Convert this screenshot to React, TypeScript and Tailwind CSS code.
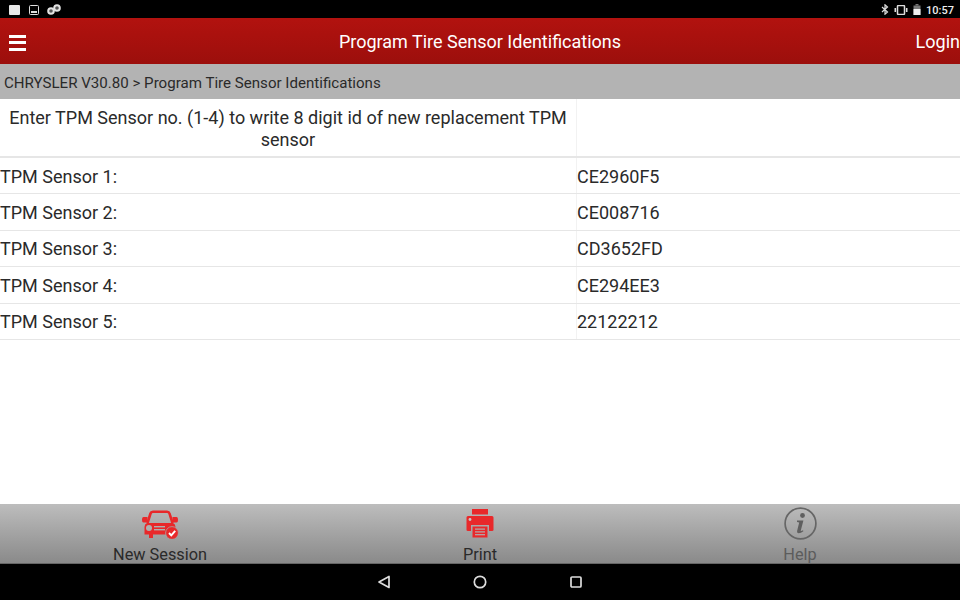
import React from 'react';

const rows = [
  { label: 'TPM Sensor 1:', value: 'CE2960F5' },
  { label: 'TPM Sensor 2:', value: 'CE008716' },
  { label: 'TPM Sensor 3:', value: 'CD3652FD' },
  { label: 'TPM Sensor 4:', value: 'CE294EE3' },
  { label: 'TPM Sensor 5:', value: '22122212' },
];

const CarIcon = () => (
  <svg width="38" height="30" viewBox="0 0 38 30" className="block">
    <path d="M6.5 14 L9.5 4.5 Q10 2.8 12 2.8 H26 Q28 2.8 28.5 4.5 L31.5 14" fill="none" stroke="#e8282a" strokeWidth="2.6" />
    <path d="M2.5 8 H6.5 V13.5 H2.5 Q1 13.5 1 11 Q1 8 2.5 8 Z M31.5 8 H35.5 Q37 8 37 11 Q37 13.5 35.5 13.5 H31.5 Z" fill="#e8282a" />
    <path d="M6 14 H32 Q34.5 15 34.5 18 V25.5 H30 V29 H26 V25.5 H12 V29 H8 V25.5 H3.5 V18 Q3.5 15 6 14 Z" fill="#e8282a" />
    <circle cx="8" cy="19" r="3" fill="#b0b0b0" />
    <rect x="13" y="17" width="11" height="1.4" fill="#b0b0b0" />
    <rect x="13" y="20" width="11" height="1.4" fill="#b0b0b0" />
    <circle cx="31" cy="24" r="6.4" fill="#e8282a" stroke="#a8a8a8" strokeWidth="0.8" />
    <path d="M28 24 L30.3 26.4 L34.2 21.8" fill="none" stroke="#fff" strokeWidth="1.9" />
  </svg>
);

const PrintIcon = () => (
  <svg width="28" height="30" viewBox="0 0 28 30" className="block">
    <rect x="6" y="0" width="16" height="5.5" fill="#e8282a" />
    <path d="M2 7 H26 Q27.5 7 27.5 8.5 V21 Q27.5 22 26 22 H23 V16 H5 V22 H2 Q0.5 22 0.5 21 V8.5 Q0.5 7 2 7 Z" fill="#e8282a" />
    <circle cx="4" cy="10.5" r="1.4" fill="#c8c8c8" />
    <path d="M6.5 17.5 H21.5 V28.5 H6.5 Z" fill="#e8282a" />
    <rect x="9" y="19.5" width="10" height="1.2" fill="#b0b0b0" />
    <rect x="9" y="22.3" width="10" height="1.2" fill="#b0b0b0" />
    <rect x="9" y="25.1" width="10" height="1.2" fill="#b0b0b0" />
  </svg>
);

const HelpIcon = () => (
  <svg width="33" height="33" viewBox="0 0 33 33" className="block">
    <circle cx="16.5" cy="16.5" r="15.4" fill="none" stroke="#666" strokeWidth="1.7" />
    <circle cx="18.5" cy="8.5" r="2.4" fill="#5f5f5f" />
    <path d="M13 13.5 H19.4 L16.8 23.5 Q16.6 24.8 19 23.3 L19.4 24.3 Q16.5 26.4 14.4 26.2 Q12.6 26 13.1 24 L15.2 15.6 L13 15 Z" fill="#5f5f5f" />
  </svg>
);

export default function App() {
  return (
    <div className="w-[960px] h-[600px] flex flex-col bg-white overflow-hidden font-['Roboto',sans-serif]">
      {/* status bar */}
      <div className="h-[18px] bg-black flex items-center pt-px pl-[9px] pr-[6px] text-white">
        <div className="w-[11px] h-[10px] bg-[#e8e8e8] rounded-[1px]" />
        <svg width="10" height="10" viewBox="0 0 10 10" className="ml-[9px]">
          <rect x="0.5" y="0.5" width="9" height="9" rx="1" fill="none" stroke="#ddd" />
          <rect x="2" y="6" width="6" height="2" fill="#ddd" />
        </svg>
        <svg width="14" height="11" viewBox="0 0 14 11" className="ml-[8px]">
          <circle cx="4" cy="7" r="2.8" fill="#555" stroke="#e4e4e4" strokeWidth="2" />
          <circle cx="10" cy="4" r="2.8" fill="#555" stroke="#e4e4e4" strokeWidth="2" />
        </svg>
        <div className="ml-auto flex items-center">
          <svg width="8" height="11" viewBox="0 0 8 11">
            <path d="M1 3 L6.5 8 L4 10.2 V0.8 L6.5 3 L1 8" fill="none" stroke="#ddd" strokeWidth="1.2" />
          </svg>
          <svg width="14" height="10" viewBox="0 0 14 10" className="ml-[5px]">
            <rect x="3.5" y="0.5" width="7" height="9" rx="1" fill="none" stroke="#ddd" strokeWidth="1.5" />
            <rect x="0.5" y="3" width="1.6" height="4" fill="#ddd" />
            <rect x="11.9" y="3" width="1.6" height="4" fill="#ddd" />
          </svg>
          <svg width="8" height="11" viewBox="0 0 8 11" className="ml-[5px]">
            <rect x="0.5" y="1.5" width="7" height="9.5" fill="#777" />
            <rect x="2.5" y="0" width="3" height="1.5" fill="#777" />
            <rect x="0.5" y="5" width="7" height="6" fill="#eee" />
          </svg>
          <span className="ml-[5px] pt-[2px] text-[11px] font-medium leading-none text-[#eee]">10:57</span>
        </div>
      </div>

      {/* header */}
      <div className="relative h-[46px] flex items-center justify-center bg-gradient-to-b from-[#b2120f] to-[#9c0f0c] text-white">
        <div className="absolute left-[9px] top-[16.5px] w-[17px] flex flex-col gap-[3.5px]">
          <div className="h-[3px] bg-white" />
          <div className="h-[3px] bg-white" />
          <div className="h-[3px] bg-white" />
        </div>
        <span className="text-[18px]">Program Tire Sensor Identifications</span>
        <span className="absolute right-0 text-[18px]">Login</span>
      </div>

      {/* breadcrumb */}
      <div className="h-[35px] bg-[#b3b3b3] flex items-center pl-1 pt-[3px] text-[15.1px] text-[#2a2a2a]">
        CHRYSLER V30.80 &gt; Program Tire Sensor Identifications
      </div>

      {/* table */}
      <div className="flex-1">
        <div className="h-[59px] flex border-b-2 border-[#e6e6e6]">
          <div className="w-[577px] px-2 pt-[8px] text-center text-[18px] leading-[22px] text-[#2a2a2a] border-r border-[#f2f2f2]">
            Enter TPM Sensor no. (1-4) to write 8 digit id of new replacement TPM sensor
          </div>
          <div className="flex-1" />
        </div>
        {rows.map((row) => (
          <div key={row.label} className="h-[36.4px] flex items-center border-b border-[#e6e6e6] text-[18px] text-[#2a2a2a]">
            <div className="w-[577px] h-full flex items-center pt-px border-r border-[#f2f2f2]">{row.label}</div>
            <div className="flex-1 h-full flex items-center pt-px">{row.value}</div>
          </div>
        ))}
      </div>

      {/* bottom actions */}
      <div className="h-[60px] grid grid-cols-3 bg-gradient-to-b from-[#bdbdbd] to-[#8a8a8a] border-b border-[#666]">
        <div className="flex flex-col items-center pt-[5px]">
          <CarIcon />
          <span className="mt-[7px] text-[16.3px] leading-[18px] text-[#2a2a2a]">New Session</span>
        </div>
        <div className="flex flex-col items-center pt-[5px]">
          <PrintIcon />
          <span className="mt-[7px] text-[16.3px] leading-[18px] text-[#2a2a2a]">Print</span>
        </div>
        <div className="flex flex-col items-center pt-[3px]">
          <HelpIcon />
          <span className="mt-[6px] text-[16.3px] leading-[18px] text-[#5c5c5c]">Help</span>
        </div>
      </div>

      {/* android nav */}
      <div className="h-[36px] bg-black flex items-center justify-center">
        <svg width="14" height="14" viewBox="0 0 14 14" className="mr-[82px]">
          <path d="M12 1.5 V12.5 L2 7 Z" fill="none" stroke="#ddd" strokeWidth="1.7" strokeLinejoin="round" />
        </svg>
        <svg width="14" height="14" viewBox="0 0 14 14">
          <circle cx="7" cy="7" r="5.7" fill="none" stroke="#ddd" strokeWidth="1.7" />
        </svg>
        <svg width="14" height="14" viewBox="0 0 14 14" className="ml-[82px]">
          <rect x="2" y="2" width="10" height="10" rx="1" fill="none" stroke="#ddd" strokeWidth="1.7" />
        </svg>
      </div>
    </div>
  );
}
